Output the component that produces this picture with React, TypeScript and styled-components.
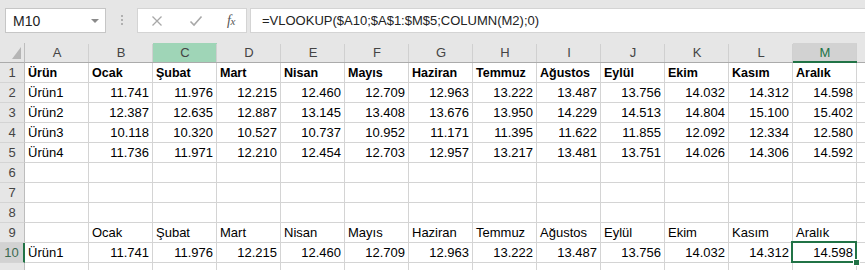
import React from "react"
import styled, { createGlobalStyle, css } from "styled-components"

const GlobalStyle = createGlobalStyle`
  html, body {
    margin: 0;
    padding: 0;
    background: #e6e6e6;
  }
  body {
    font-family: "Liberation Sans", Arial, sans-serif;
  }
`

const GREEN = "#217346"

const Window = styled.div`
  width: 865px;
  height: 270px;
  overflow: hidden;
  background: #e6e6e6;
`

const FormulaBar = styled.div`
  display: flex;
  align-items: flex-start;
  height: 43px;
  padding: 8px 0 0 5px;
  box-sizing: border-box;
`

const NameBox = styled.div`
  display: flex;
  align-items: center;
  justify-content: space-between;
  width: 101px;
  height: 25px;
  box-sizing: border-box;
  padding: 0 6px 0 7px;
  background: #fff;
  border: 1px solid #c6c6c6;
  font-size: 14px;
  color: #222;
`

const Caret = styled.span`
  width: 0;
  height: 0;
  border-left: 4px solid transparent;
  border-right: 4px solid transparent;
  border-top: 4px solid #8a8a8a;
`

const Grip = styled.div`
  display: flex;
  flex-direction: column;
  gap: 2px;
  width: 31px;
  align-items: center;
  padding-top: 7px;

  span {
    width: 2px;
    height: 2px;
    background: #b0b0b0;
  }
`

const ButtonGroup = styled.div`
  display: flex;
  align-items: center;
  width: 110px;
  height: 25px;
  box-sizing: border-box;
  background: #fff;
  border: 1px solid #d4d4d4;
  margin-right: 3px;
`

const IconButton = styled.div<{ $w: number }>`
  display: flex;
  align-items: center;
  justify-content: center;
  width: ${(p) => p.$w}px;
  height: 100%;
`

const Fx = styled.span`
  font-family: "Liberation Serif", "Times New Roman", serif;
  font-style: italic;
  font-size: 14px;
  color: #555;
  letter-spacing: -0.5px;

  sub {
    font-size: 11px;
    vertical-align: baseline;
  }
`

const FormulaInput = styled.div`
  flex: 1;
  height: 25px;
  box-sizing: border-box;
  background: #fff;
  border: 1px solid #d4d4d4;
  border-right: none;
  padding-left: 11px;
  font-size: 13px;
  line-height: 23px;
  color: #222;
  white-space: nowrap;
`

const Sheet = styled.div`
  display: grid;
  grid-template-columns: 25px repeat(14, 64px);
  grid-auto-rows: 20px;
  background: #fff;
`

const Corner = styled.div`
  background: #e6e6e6;
  border-right: 1px solid #bdbdbd;
  border-bottom: 1px solid #ababab;
  display: flex;
  align-items: flex-end;
  justify-content: flex-end;
  padding: 0 3px 3px 0;
  box-sizing: border-box;
`

const ColHeader = styled.div<{ $state?: "picked" | "active" }>`
  display: flex;
  align-items: center;
  justify-content: center;
  box-sizing: border-box;
  background: #e6e6e6;
  color: #444;
  font-size: 13px;
  border-bottom: 1px solid #ababab;
  position: relative;

  &::after {
    content: "";
    position: absolute;
    right: 0;
    top: 1px;
    bottom: 0;
    width: 1px;
    background: #d0d0d0;
  }

  ${(p) =>
    p.$state === "picked" &&
    css`
      background: #9fd5b7;
    `}

  ${(p) =>
    p.$state === "active" &&
    css`
      background: #d2d2d2;
      color: ${GREEN};
      border-bottom: 2px solid ${GREEN};
    `}
`

const RowHeader = styled.div<{ $active?: boolean }>`
  display: flex;
  align-items: flex-end;
  justify-content: center;
  padding-bottom: 2px;
  box-sizing: border-box;
  background: #e6e6e6;
  color: #444;
  font-size: 13px;
  border-right: 1px solid #bdbdbd;
  border-bottom: 1px solid #d4d4d4;

  ${(p) =>
    p.$active &&
    css`
      background: #d2d2d2;
      color: #3b6a50;
      border-right: 2px solid ${GREEN};
    `}
`

const Cell = styled.div<{ $num?: boolean; $bold?: boolean; $selected?: boolean }>`
  box-sizing: border-box;
  border-right: 1px solid #d4d4d4;
  border-bottom: 1px solid #d4d4d4;
  padding: 0 3px 2px 3px;
  display: flex;
  align-items: flex-end;
  justify-content: ${(p) => (p.$num ? "flex-end" : "flex-start")};
  font-size: ${(p) => (p.$bold ? "12.5px" : "13px")};
  font-weight: ${(p) => (p.$bold ? 700 : 400)};
  color: #000;
  white-space: nowrap;
  position: relative;

  ${(p) =>
    p.$selected &&
    css`
      &::after {
        content: "";
        position: absolute;
        left: -2px;
        top: -2px;
        width: 66px;
        height: 22px;
        border: 2px solid ${GREEN};
        box-sizing: border-box;
        z-index: 2;
      }
      &::before {
        content: "";
        position: absolute;
        right: -4px;
        bottom: -4px;
        width: 5px;
        height: 5px;
        background: ${GREEN};
        border: 1px solid #fff;
        z-index: 3;
      }
    `}
`

// the last column (N) is cut off by the window edge, so its letter is not shown
const COLS = ["A", "B", "C", "D", "E", "F", "G", "H", "I", "J", "K", "L", "M", ""]

const MONTHS = [
  "Ocak",
  "Şubat",
  "Mart",
  "Nisan",
  "Mayıs",
  "Haziran",
  "Temmuz",
  "Ağustos",
  "Eylül",
  "Ekim",
  "Kasım",
  "Aralık",
]

const DATA: Record<string, string[]> = {
  "Ürün1": ["11.741", "11.976", "12.215", "12.460", "12.709", "12.963", "13.222", "13.487", "13.756", "14.032", "14.312", "14.598"],
  "Ürün2": ["12.387", "12.635", "12.887", "13.145", "13.408", "13.676", "13.950", "14.229", "14.513", "14.804", "15.100", "15.402"],
  "Ürün3": ["10.118", "10.320", "10.527", "10.737", "10.952", "11.171", "11.395", "11.622", "11.855", "12.092", "12.334", "12.580"],
  "Ürün4": ["11.736", "11.971", "12.210", "12.454", "12.703", "12.957", "13.217", "13.481", "13.751", "14.026", "14.306", "14.592"],
}

type CellDef = { text?: string; num?: boolean; bold?: boolean }

const productRow = (name: string): CellDef[] => [
  { text: name },
  ...DATA[name].map((v) => ({ text: v, num: true })),
]

const ROWS: CellDef[][] = [
  [{ text: "Ürün", bold: true }, ...MONTHS.map((m) => ({ text: m, bold: true }))],
  productRow("Ürün1"),
  productRow("Ürün2"),
  productRow("Ürün3"),
  productRow("Ürün4"),
  [],
  [],
  [],
  [{}, ...MONTHS.map((m) => ({ text: m }))],
  productRow("Ürün1"),
]

const CrossIcon = () => (
  <svg width="12" height="12" viewBox="0 0 12 12">
    <path d="M1.5 1.5 L10.5 10.5 M10.5 1.5 L1.5 10.5" stroke="#a8a8a8" strokeWidth="1.3" fill="none" />
  </svg>
)

const CheckIcon = () => (
  <svg width="14" height="12" viewBox="0 0 14 12">
    <path d="M1.5 6.5 L5 10 L12.5 1.5" stroke="#a8a8a8" strokeWidth="1.6" fill="none" />
  </svg>
)

const CornerTriangle = () => (
  <svg width="9" height="12" viewBox="0 0 9 12">
    <polygon points="9,0 9,12 0,12" fill="#b5b5b5" />
  </svg>
)

const App = () => {
  return (
    <Window>
      <GlobalStyle />
      <FormulaBar>
        <NameBox>
          M10
          <Caret />
        </NameBox>
        <Grip>
          <span />
          <span />
          <span />
        </Grip>
        <ButtonGroup>
          <IconButton $w={38}>
            <CrossIcon />
          </IconButton>
          <IconButton $w={40}>
            <CheckIcon />
          </IconButton>
          <IconButton $w={30}>
            <Fx>
              f<sub>x</sub>
            </Fx>
          </IconButton>
        </ButtonGroup>
        <FormulaInput>=VLOOKUP($A10;$A$1:$M$5;COLUMN(M2);0)</FormulaInput>
      </FormulaBar>
      <Sheet>
        <Corner>
          <CornerTriangle />
        </Corner>
        {COLS.map((c, i) => (
          <ColHeader key={i} $state={c === "C" ? "picked" : c === "M" ? "active" : undefined}>
            {c}
          </ColHeader>
        ))}
        {ROWS.map((row, r) => (
          <React.Fragment key={r}>
            <RowHeader $active={r === 9}>{r + 1}</RowHeader>
            {COLS.map((c, i) => {
              const def = row[i] || {}
              return (
                <Cell
                  key={i}
                  $num={def.num}
                  $bold={def.bold}
                  $selected={r === 9 && c === "M"}
                >
                  {def.text}
                </Cell>
              )
            })}
          </React.Fragment>
        ))}
        {/* row 11 peeks in under the window edge */}
        <RowHeader />
        {COLS.map((_, i) => (
          <Cell key={`r11-${i}`} />
        ))}
      </Sheet>
    </Window>
  )
}

export default App
